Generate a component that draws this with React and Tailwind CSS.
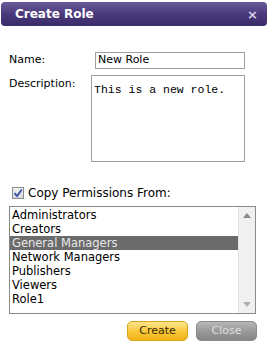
import React from 'react'

const roles = ['Administrators', 'Creators', 'General Managers', 'Network Managers', 'Publishers', 'Viewers', 'Role1']

export default function App() {
  return (
    <div className="w-[268px] h-[349px] bg-white overflow-hidden" style={{ fontFamily: '"DejaVu Sans", Verdana, sans-serif' }}>
      {/* title bar */}
      <div className="mx-[1px] mt-[2px] h-[24px] rounded-[4px] bg-gradient-to-b from-[#6a5a98] via-[#4a3a7c] to-[#3a2a68] flex items-center justify-between pl-[14px] pr-[9px]">
        <span className="text-white font-bold text-[12px]">Create Role</span>
        <span className="text-[#d8d0ea] font-bold text-[13px] leading-none">×</span>
      </div>

      <div className="pl-[9px] pr-[13px]">
        <div className="flex items-center mt-[26px]">
          <span className="w-[86px] text-[11px] text-black">Name:</span>
          <div className="w-[150px] h-[17px] border border-[#a0a0a0] flex items-center pl-[2px] text-[11px] text-black">New Role</div>
        </div>
        <div className="flex mt-[6px]">
          <span className="w-[82px] text-[11px] text-black pt-[1px]">Description:</span>
          <div className="w-[154px] h-[87px] border border-[#a0a0a0] px-[2px] pt-[5px] text-[11.5px] text-black" style={{ fontFamily: '"Liberation Mono", "Courier New", monospace' }}>This is a new role.</div>
        </div>

        <div className="flex items-center mt-[22px] ml-[3px]">
          <div className="w-[12px] h-[12px] border border-[#8c8c8c] bg-gradient-to-b from-[#f0f0f0] to-[#d8d8e4] flex items-center justify-center">
            <svg width="10" height="10" viewBox="0 0 10 10"><path d="M1.5 5.2 L4 8 L8.8 1.5" fill="none" stroke="#3a4fa8" strokeWidth="1.8" /></svg>
          </div>
          <span className="ml-[4px] text-[12px] text-black">Copy Permissions From:</span>
        </div>

        <div className="mt-[4px] w-[247px] h-[108px] border border-[#8a8a8a] flex">
          <div className="flex-1 pt-[1px]">
            {roles.map((r) => (
              <div key={r} className={`h-[14px] leading-[14px] pl-[2px] text-[11.5px] ${r === 'General Managers' ? 'bg-[#6b6b6b] text-[#e8e8e8]' : 'text-black'}`}>{r}</div>
            ))}
          </div>
          <div className="w-[17px] bg-[#f0f0f0] border-l border-[#e4e4e4] flex flex-col justify-between items-center py-[6px]">
            <svg width="8" height="5" viewBox="0 0 8 5"><path d="M0 5 L4 0 L8 5 Z" fill="#8a8a8a" /></svg>
            <svg width="8" height="5" viewBox="0 0 8 5"><path d="M0 0 L4 5 L8 0 Z" fill="#b0b0b0" /></svg>
          </div>
        </div>

        <div className="flex justify-end gap-[8px] mt-[7px] mr-[-2px]">
          <div className="w-[61px] h-[20px] rounded-[5px] border border-[#d8a420] bg-gradient-to-b from-[#fde58a] via-[#f8c93a] to-[#f0b410] flex items-center justify-center text-[11px] text-[#3a2a00]">Create</div>
          <div className="w-[61px] h-[20px] rounded-[5px] border border-[#8a8a8a] bg-gradient-to-b from-[#b8b8b8] via-[#9a9a9a] to-[#868686] flex items-center justify-center text-[11px] text-[#dedede]">Close</div>
        </div>
      </div>
    </div>
  )
}
